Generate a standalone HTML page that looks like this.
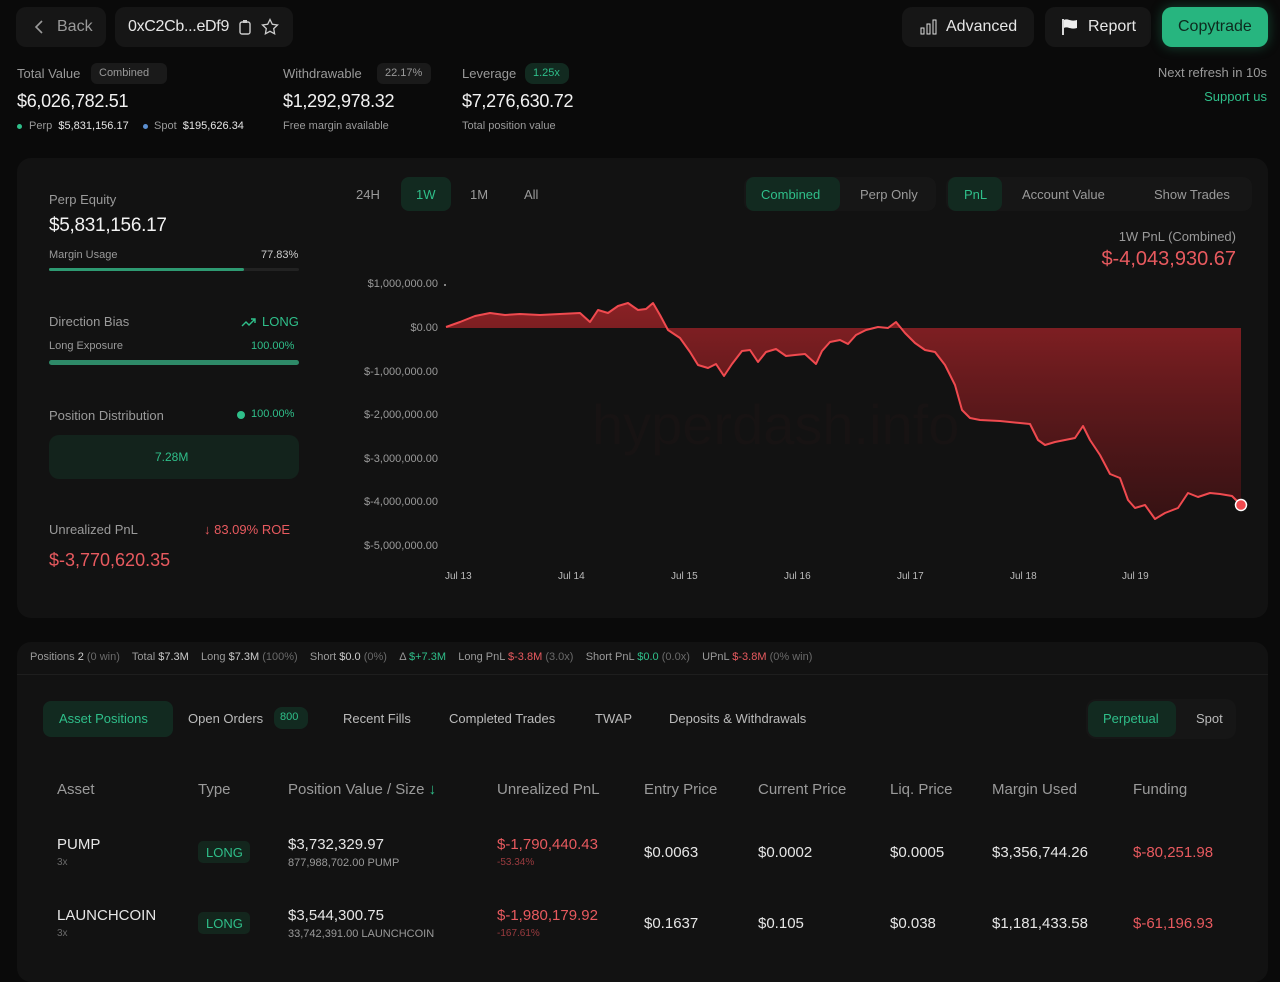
<!DOCTYPE html>
<html><head><meta charset="utf-8"><style>
*{margin:0;padding:0;box-sizing:border-box}
body{width:1280px;height:966px;background:#0a0a0a;font-family:"Liberation Sans",sans-serif;color:#e6e6e6;position:relative;overflow:hidden}
.a{position:absolute;white-space:nowrap}
.g{color:#2fbf8a}.r{color:#e85a5f}.m{color:#9a9a9a}.d{color:#6a6a6a}
.btn{position:absolute;background:#161616;border-radius:10px}
.pill{position:absolute;border-radius:8px;background:#122a20;color:#2fbf8a}
.card{position:absolute;background:#121212;border-radius:14px}
</style></head><body>

<div class="btn" style="left:16px;top:7px;width:90px;height:40px"></div>
<svg class="a" style="left:33px;top:19px" width="12" height="16"><path d="M9 2L3 8l6 6" stroke="#9a9a9a" stroke-width="1.6" fill="none"/></svg>
<div class="a m" style="left:57px;top:18px;font-size:16px">Back</div>
<div class="btn" style="left:115px;top:7px;width:178px;height:40px"></div>
<div class="a" style="left:128px;top:18px;font-size:16px;letter-spacing:-0.3px">0xC2Cb...eDf9</div>
<svg class="a" style="left:238px;top:19px" width="14" height="16"><rect x="2" y="3" width="10" height="12" rx="2" stroke="#ccc" stroke-width="1.4" fill="none"/><rect x="5" y="1" width="4" height="3" fill="#ccc"/></svg>
<svg class="a" style="left:261px;top:18px" width="18" height="18"><path d="M9 1.5l2.3 4.8 5.2.7-3.8 3.6.9 5.2L9 13.3 4.4 15.8l.9-5.2L1.5 7l5.2-.7z" stroke="#ccc" stroke-width="1.3" fill="none"/></svg>

<div class="btn" style="left:902px;top:7px;width:132px;height:40px"></div>
<svg class="a" style="left:920px;top:19px" width="18" height="16"><rect x="1" y="9" width="3" height="6" stroke="#ddd" fill="none"/><rect x="7" y="5" width="3" height="10" stroke="#ddd" fill="none"/><rect x="13" y="1" width="3" height="14" stroke="#ddd" fill="none"/></svg>
<div class="a" style="left:946px;top:18px;font-size:16px">Advanced</div>
<div class="btn" style="left:1045px;top:7px;width:106px;height:40px"></div>
<svg class="a" style="left:1061px;top:18px" width="18" height="18"><path d="M2 1v16" stroke="#eee" stroke-width="1.8"/><path d="M3 2c4-2 6 2 13 0v8c-7 2-9-2-13 0z" fill="#eee"/></svg>
<div class="a" style="left:1088px;top:18px;font-size:16px">Report</div>
<div class="a" style="left:1162px;top:7px;width:106px;height:40px;background:#27b57f;border-radius:10px;box-shadow:0 0 12px rgba(39,181,127,.35)"></div>
<div class="a" style="left:1178px;top:18px;font-size:16px;color:#0d2a1e">Copytrade</div>

<div class="a m" style="left:17px;top:66px;font-size:13px">Total Value</div>
<div class="a" style="left:91px;top:63px;width:76px;height:21px;background:#1a1a1a;border-radius:6px"></div>
<div class="a m" style="left:99px;top:67px;font-size:11px">Combined</div>
<div class="a" style="left:17px;top:91px;font-size:18px;color:#f2f2f2;letter-spacing:-0.3px">$6,026,782.51</div>
<div class="a" style="left:17px;top:124px;width:5px;height:5px;border-radius:50%;background:#2fbf8a"></div>
<div class="a" style="left:29px;top:120px;font-size:11px"><span class="m">Perp</span> &nbsp;$5,831,156.17</div>
<div class="a" style="left:143px;top:124px;width:5px;height:5px;border-radius:50%;background:#5b8fd0"></div>
<div class="a" style="left:154px;top:120px;font-size:11px"><span class="m">Spot</span> &nbsp;$195,626.34</div>

<div class="a m" style="left:283px;top:66px;font-size:13px">Withdrawable</div>
<div class="a" style="left:377px;top:63px;width:54px;height:21px;background:#1a1a1a;border-radius:6px"></div>
<div class="a m" style="left:385px;top:67px;font-size:11px">22.17%</div>
<div class="a" style="left:283px;top:91px;font-size:18px;color:#f2f2f2;letter-spacing:-0.3px">$1,292,978.32</div>
<div class="a m" style="left:283px;top:120px;font-size:11px">Free margin available</div>

<div class="a m" style="left:462px;top:66px;font-size:13px">Leverage</div>
<div class="pill" style="left:525px;top:63px;width:44px;height:21px"></div>
<div class="a g" style="left:533px;top:67px;font-size:11px">1.25x</div>
<div class="a" style="left:462px;top:91px;font-size:18px;color:#f2f2f2;letter-spacing:-0.3px">$7,276,630.72</div>
<div class="a m" style="left:462px;top:120px;font-size:11px">Total position value</div>

<div class="a m" style="right:13px;top:65px;font-size:13px">Next refresh in 10s</div>
<div class="a g" style="right:13px;top:89px;font-size:13px">Support us</div>

<div class="card" style="left:17px;top:158px;width:1251px;height:460px"></div>
<div class="a m" style="left:49px;top:192px;font-size:13px">Perp Equity</div>
<div class="a" style="left:49px;top:215px;font-size:19px;color:#f2f2f2;letter-spacing:-0.3px">$5,831,156.17</div>
<div class="a m" style="left:49px;top:249px;font-size:11px">Margin Usage</div>
<div class="a" style="left:261px;top:249px;font-size:11px;color:#ccc">77.83%</div>
<div class="a" style="left:49px;top:268px;width:250px;height:3px;background:#222;border-radius:2px"><div style="width:78%;height:3px;background:#2e9a72;border-radius:2px"></div></div>
<div class="a m" style="left:49px;top:314px;font-size:13px">Direction Bias</div>
<svg class="a" style="left:241px;top:316px" width="16" height="12"><path d="M1 10l4-4 3 3 6-6M10 3h4v4" stroke="#2fbf8a" stroke-width="1.4" fill="none"/></svg>
<div class="a g" style="left:262px;top:314px;font-size:13px">LONG</div>
<div class="a m" style="left:49px;top:340px;font-size:11px">Long Exposure</div>
<div class="a g" style="left:251px;top:340px;font-size:11px">100.00%</div>
<div class="a" style="left:49px;top:360px;width:250px;height:5px;background:#2e8a68;border-radius:3px"></div>
<div class="a m" style="left:49px;top:408px;font-size:13px">Position Distribution</div>
<div class="a" style="left:237px;top:411px;width:8px;height:8px;border-radius:50%;background:#2fbf8a"></div>
<div class="a g" style="left:251px;top:408px;font-size:11px">100.00%</div>
<div class="a" style="left:49px;top:435px;width:250px;height:44px;background:#13231c;border-radius:10px"></div>
<div class="a g" style="left:155px;top:450px;font-size:12px">7.28M</div>
<div class="a m" style="left:49px;top:522px;font-size:13px">Unrealized PnL</div>
<div class="a r" style="left:204px;top:522px;font-size:13px">↓ 83.09% ROE</div>
<div class="a r" style="left:49px;top:550px;font-size:18px">$-3,770,620.35</div>

<div class="a m" style="left:356px;top:187px;font-size:13px">24H</div>
<div class="pill" style="left:401px;top:177px;width:50px;height:34px"></div>
<div class="a g" style="left:416px;top:187px;font-size:13px">1W</div>
<div class="a m" style="left:470px;top:187px;font-size:13px">1M</div>
<div class="a m" style="left:524px;top:187px;font-size:13px">All</div>
<div class="a" style="left:744px;top:177px;width:192px;height:34px;background:#161616;border-radius:9px"></div>
<div class="pill" style="left:746px;top:177px;width:94px;height:34px"></div>
<div class="a g" style="left:761px;top:187px;font-size:13px">Combined</div>
<div class="a m" style="left:860px;top:187px;font-size:13px">Perp Only</div>
<div class="a" style="left:946px;top:177px;width:306px;height:34px;background:#161616;border-radius:9px"></div>
<div class="pill" style="left:948px;top:177px;width:54px;height:34px"></div>
<div class="a g" style="left:964px;top:187px;font-size:13px">PnL</div>
<div class="a m" style="left:1022px;top:187px;font-size:13px">Account Value</div>
<div class="a m" style="left:1154px;top:187px;font-size:13px">Show Trades</div>
<div class="a m" style="right:44px;top:229px;font-size:13px">1W PnL (Combined)</div>
<div class="a r" style="right:44px;top:248px;font-size:20px">$-4,043,930.67</div>

<div class="a m" style="right:842px;top:278px;font-size:11px">$1,000,000.00</div>
<div class="a m" style="right:842px;top:322px;font-size:11px">$0.00</div>
<div class="a m" style="right:842px;top:366px;font-size:11px">$-1,000,000.00</div>
<div class="a m" style="right:842px;top:409px;font-size:11px">$-2,000,000.00</div>
<div class="a m" style="right:842px;top:453px;font-size:11px">$-3,000,000.00</div>
<div class="a m" style="right:842px;top:496px;font-size:11px">$-4,000,000.00</div>
<div class="a m" style="right:842px;top:540px;font-size:11px">$-5,000,000.00</div>
<div class="a" style="left:445px;top:571px;font-size:10px;color:#bbb">Jul 13</div>
<div class="a" style="left:558px;top:571px;font-size:10px;color:#bbb">Jul 14</div>
<div class="a" style="left:671px;top:571px;font-size:10px;color:#bbb">Jul 15</div>
<div class="a" style="left:784px;top:571px;font-size:10px;color:#bbb">Jul 16</div>
<div class="a" style="left:897px;top:571px;font-size:10px;color:#bbb">Jul 17</div>
<div class="a" style="left:1010px;top:571px;font-size:10px;color:#bbb">Jul 18</div>
<div class="a" style="left:1122px;top:571px;font-size:10px;color:#bbb">Jul 19</div>
<div class="a" style="left:592px;top:392px;font-size:56px;color:#171313">hyperdash.info</div>
<svg class="a" style="left:0;top:0" width="1280" height="620">
<defs><linearGradient id="f" gradientUnits="userSpaceOnUse" x1="0" y1="300" x2="0" y2="520"><stop offset="0" stop-color="#b3262b" stop-opacity=".75"/><stop offset="1" stop-color="#5a1215" stop-opacity=".5"/></linearGradient></defs>
<circle cx="445" cy="285" r="1" fill="#aaa"/>
<polygon fill="url(#f)" points="446,328 446,327 460,322 475,316 490,313 505,315 520,314 540,315 560,314 580,313 590,322 598,310 608,313 618,306 628,303 638,310 646,309 653,303 660,315 668,330 680,338 690,352 698,365 708,368 716,364 724,376 732,364 742,351 750,350 758,362 766,352 776,349 786,356 795,355 805,354 816,364 822,351 830,342 840,340 848,344 856,335 866,330 878,327 888,328 896,322 905,333 915,343 925,350 935,352 945,365 955,385 962,410 970,418 980,420 1000,421 1020,423 1030,424 1038,440 1045,445 1055,442 1065,440 1075,438 1083,426 1090,440 1100,455 1110,474 1120,478 1128,500 1135,508 1145,505 1155,519 1165,513 1178,508 1188,493 1198,497 1210,493 1220,494 1232,496 1241,505 1241,328"/>
<polyline fill="none" stroke="#f04a4f" stroke-width="2" stroke-linejoin="round" points="446,327 460,322 475,316 490,313 505,315 520,314 540,315 560,314 580,313 590,322 598,310 608,313 618,306 628,303 638,310 646,309 653,303 660,315 668,330 680,338 690,352 698,365 708,368 716,364 724,376 732,364 742,351 750,350 758,362 766,352 776,349 786,356 795,355 805,354 816,364 822,351 830,342 840,340 848,344 856,335 866,330 878,327 888,328 896,322 905,333 915,343 925,350 935,352 945,365 955,385 962,410 970,418 980,420 1000,421 1020,423 1030,424 1038,440 1045,445 1055,442 1065,440 1075,438 1083,426 1090,440 1100,455 1110,474 1120,478 1128,500 1135,508 1145,505 1155,519 1165,513 1178,508 1188,493 1198,497 1210,493 1220,494 1232,496 1241,505"/>
<circle cx="1241" cy="505" r="5.5" fill="#f04a4f" stroke="#fff" stroke-width="1.5"/>
</svg>

<div class="card" style="left:17px;top:642px;width:1251px;height:340px"></div>
<div class="a" style="left:17px;top:674px;width:1251px;height:1px;background:#1e1e1e"></div>
<div class="a" style="left:30px;top:651px;font-size:11px;color:#ccc"><span class="m">Positions</span> 2 <span class="d">(0 win)</span> &nbsp;&nbsp; <span class="m">Total</span> $7.3M &nbsp;&nbsp; <span class="m">Long</span> $7.3M <span class="d">(100%)</span> &nbsp;&nbsp; <span class="m">Short</span> $0.0 <span class="d">(0%)</span> &nbsp;&nbsp; <span class="m">Δ</span> <span class="g">$+7.3M</span> &nbsp;&nbsp; <span class="m">Long PnL</span> <span class="r">$-3.8M</span> <span class="d">(3.0x)</span> &nbsp;&nbsp; <span class="m">Short PnL</span> <span class="g">$0.0</span> <span class="d">(0.0x)</span> &nbsp;&nbsp; <span class="m">UPnL</span> <span class="r">$-3.8M</span> <span class="d">(0% win)</span></div>

<div class="pill" style="left:43px;top:701px;width:130px;height:36px"></div>
<div class="a g" style="left:59px;top:711px;font-size:13px">Asset Positions</div>
<div class="a" style="left:188px;top:711px;font-size:13px;color:#bbb">Open Orders</div>
<div class="pill" style="left:274px;top:707px;width:34px;height:22px"></div>
<div class="a g" style="left:280px;top:711px;font-size:11px">800</div>
<div class="a" style="left:343px;top:711px;font-size:13px;color:#bbb">Recent Fills</div>
<div class="a" style="left:449px;top:711px;font-size:13px;color:#bbb">Completed Trades</div>
<div class="a" style="left:595px;top:711px;font-size:13px;color:#bbb">TWAP</div>
<div class="a" style="left:669px;top:711px;font-size:13px;color:#bbb">Deposits &amp; Withdrawals</div>
<div class="a" style="left:1086px;top:699px;width:150px;height:40px;background:#161616;border-radius:10px"></div>
<div class="pill" style="left:1088px;top:701px;width:88px;height:36px"></div>
<div class="a g" style="left:1103px;top:711px;font-size:13px">Perpetual</div>
<div class="a" style="left:1196px;top:711px;font-size:13px;color:#bbb">Spot</div>

<div class="a m" style="left:57px;top:781px;font-size:15px">Asset</div>
<div class="a m" style="left:198px;top:781px;font-size:15px">Type</div>
<div class="a m" style="left:288px;top:781px;font-size:15px">Position Value / Size <span class="g">↓</span></div>
<div class="a m" style="left:497px;top:781px;font-size:15px">Unrealized PnL</div>
<div class="a m" style="left:644px;top:781px;font-size:15px">Entry Price</div>
<div class="a m" style="left:758px;top:781px;font-size:15px">Current Price</div>
<div class="a m" style="left:890px;top:781px;font-size:15px">Liq. Price</div>
<div class="a m" style="left:992px;top:781px;font-size:15px">Margin Used</div>
<div class="a m" style="left:1133px;top:781px;font-size:15px">Funding</div>

<div class="a" style="left:57px;top:836px;font-size:15px">PUMP</div>
<div class="a d" style="left:57px;top:857px;font-size:10px">3x</div>
<div class="a" style="left:198px;top:841px;width:52px;height:22px;background:#13261d;border-radius:5px"></div>
<div class="a g" style="left:206px;top:845px;font-size:13px">LONG</div>
<div class="a" style="left:288px;top:836px;font-size:15px">$3,732,329.97</div>
<div class="a m" style="left:288px;top:857px;font-size:11px">877,988,702.00 PUMP</div>
<div class="a r" style="left:497px;top:836px;font-size:15px">$-1,790,440.43</div>
<div class="a" style="left:497px;top:857px;font-size:10px;color:#9a3b3f">-53.34%</div>
<div class="a" style="left:644px;top:844px;font-size:15px">$0.0063</div>
<div class="a" style="left:758px;top:844px;font-size:15px">$0.0002</div>
<div class="a" style="left:890px;top:844px;font-size:15px">$0.0005</div>
<div class="a" style="left:992px;top:844px;font-size:15px">$3,356,744.26</div>
<div class="a r" style="left:1133px;top:844px;font-size:15px">$-80,251.98</div>

<div class="a" style="left:57px;top:907px;font-size:15px">LAUNCHCOIN</div>
<div class="a d" style="left:57px;top:928px;font-size:10px">3x</div>
<div class="a" style="left:198px;top:912px;width:52px;height:22px;background:#13261d;border-radius:5px"></div>
<div class="a g" style="left:206px;top:916px;font-size:13px">LONG</div>
<div class="a" style="left:288px;top:907px;font-size:15px">$3,544,300.75</div>
<div class="a m" style="left:288px;top:928px;font-size:11px">33,742,391.00 LAUNCHCOIN</div>
<div class="a r" style="left:497px;top:907px;font-size:15px">$-1,980,179.92</div>
<div class="a" style="left:497px;top:928px;font-size:10px;color:#9a3b3f">-167.61%</div>
<div class="a" style="left:644px;top:915px;font-size:15px">$0.1637</div>
<div class="a" style="left:758px;top:915px;font-size:15px">$0.105</div>
<div class="a" style="left:890px;top:915px;font-size:15px">$0.038</div>
<div class="a" style="left:992px;top:915px;font-size:15px">$1,181,433.58</div>
<div class="a r" style="left:1133px;top:915px;font-size:15px">$-61,196.93</div>
</body></html>
